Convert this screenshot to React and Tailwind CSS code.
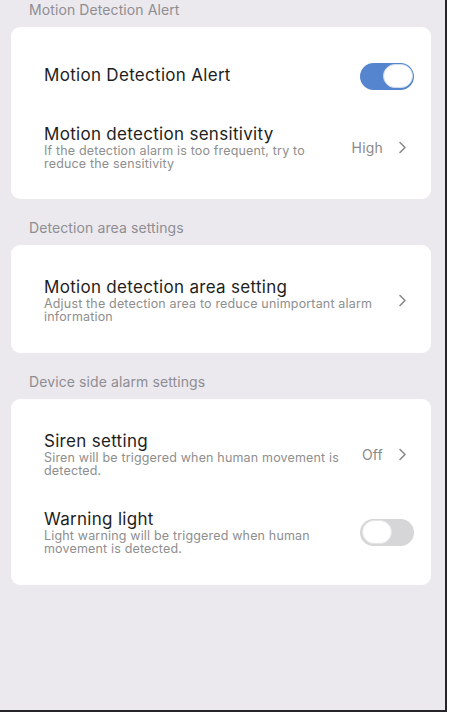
import React from "react";

const font = { fontFamily: "Inter, 'Noto Sans', sans-serif" };

function Chevron() {
  return (
    <div className="w-6 h-6 flex items-center justify-center">
      <svg width="9" height="13" viewBox="0 0 9 13" fill="none">
        <polyline points="2,1.5 7,6.5 2,11.5" stroke="#8a8a8a" strokeWidth="1.6" strokeLinecap="round" strokeLinejoin="round" />
      </svg>
    </div>
  );
}

function Toggle({ on }) {
  return (
    <div
      className={
        "w-[54px] h-[27px] rounded-full flex items-center px-[1.5px] " +
        (on ? "bg-[#5585cf] justify-end" : "bg-[#d6d6d8] justify-start")
      }
    >
      <div
        className={
          "w-[30px] h-[24px] rounded-full bg-white border " +
          (on ? "border-[#cfdcf0]" : "border-[#e4e4e6]")
        }
      />
    </div>
  );
}

function Header({ children, first }) {
  return (
    <div
      className={
        "pl-[18px] text-[14px] leading-[16px] tracking-[0.1px] text-[#8e8e92] " +
        (first ? "pt-[2px] pb-[9px]" : "pt-[21px] pb-[9px]")
      }
    >
      {children}
    </div>
  );
}

function Row({ title, sub, right }) {
  return (
    <div className="flex items-center py-[16px]">
      <div className="flex-1 min-w-0">
        <div className="text-[17px] leading-[20px] tracking-[0.3px] text-[#1e1e1e]">{title}</div>
        <div className="text-[12.5px] leading-[13px] tracking-[0.17px] text-[#8e8e8e] whitespace-nowrap">{sub}</div>
      </div>
      {right}
    </div>
  );
}

function Value({ text }) {
  return (
    <div className="flex items-center">
      <span className="text-[14px] tracking-[0.2px] text-[#8a8a8a]">{text}</span>
      <div className="ml-[7px]">
        <Chevron />
      </div>
    </div>
  );
}

export default function App() {
  return (
    <div className="w-[460px] h-[725px] bg-white" style={font}>
      <div className="w-[447px] h-[712px] bg-[#ebe8ee] border-r-2 border-b-2 border-[#26262a] pl-[11px] pr-[14px] overflow-hidden">
        <Header first>Motion Detection Alert</Header>
        <div className="bg-white rounded-[9px] pt-[17px] pb-[13px] pl-[33px] pr-[17px]">
          <div className="flex items-center h-[64px]">
            <div className="flex-1 text-[17px] tracking-[0.3px] text-[#1e1e1e]">Motion Detection Alert</div>
            <Toggle on />
          </div>
          <Row
            title="Motion detection sensitivity"
            sub={<>If the detection alarm is too frequent, try to<br />reduce the sensitivity</>}
            right={<Value text="High" />}
          />
        </div>

        <Header>Detection area settings</Header>
        <div className="bg-white rounded-[9px] pt-[16px] pb-[14px] pl-[33px] pr-[17px]">
          <Row
            title="Motion detection area setting"
            sub={<>Adjust the detection area to reduce unimportant alarm<br />information</>}
            right={<Chevron />}
          />
        </div>

        <Header>Device side alarm settings</Header>
        <div className="bg-white rounded-[9px] pt-[16px] pb-[14px] pl-[33px] pr-[17px]">
          <Row
            title="Siren setting"
            sub={<>Siren will be triggered when human movement is<br />detected.</>}
            right={<Value text="Off" />}
          />
          <Row
            title="Warning light"
            sub={<>Light warning will be triggered when human<br />movement is detected.</>}
            right={<Toggle />}
          />
        </div>
      </div>
    </div>
  );
}
